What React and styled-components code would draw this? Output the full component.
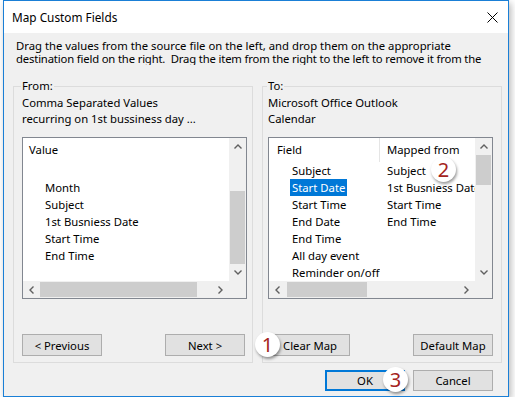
import React from 'react';
import styled, { createGlobalStyle } from 'styled-components';

const GlobalStyle = createGlobalStyle`
  html, body {
    margin: 0;
    padding: 0;
    background: #ffffff;
  }
  body {
    font-family: "Noto Sans", "Open Sans", sans-serif;
    font-size: 11.3px;
    color: #000;
  }
  * {
    box-sizing: border-box;
  }
`;

const Window = styled.div`
  margin-left: 3px;
  width: 506px;
  height: 397px;
  border: 1px solid #1a7fd6;
  background: #f0f0f0;
  box-shadow: 2px 3px 7px rgba(0, 0, 0, 0.28);
  display: flex;
  flex-direction: column;
`;

const TitleBar = styled.div`
  height: 32px;
  flex-shrink: 0;
  background: #fff;
  display: flex;
  align-items: center;
  justify-content: space-between;
  padding: 0 10px 0 8px;
`;

const Title = styled.span`
  font-size: 11.8px;
`;

const Body = styled.div`
  flex: 1;
  display: flex;
  flex-direction: column;
  padding: 6px 0 0 9px;
`;

const Description = styled.div`
  margin: 0 0 13px 3px;
  height: 26px;
  overflow: hidden;
`;

const DescLine = styled.div`
  line-height: 13px;
  white-space: pre;
  letter-spacing: ${(p) => p.$spacing || 0}px;
`;

const GroupRow = styled.div`
  display: flex;
  gap: 9px;
`;

const Group = styled.fieldset`
  width: 240px;
  min-width: 0;
  margin: 0;
  padding: 1px ${(p) => p.$pr}px 6px ${(p) => p.$pl}px;
  border: 1px solid #dcdcdc;
`;

const Legend = styled.legend`
  padding: 0 1px;
  margin-left: -1px;
  line-height: 16px;
`;

const InfoLine = styled.div`
  line-height: 16px;
  white-space: nowrap;
`;

const ListBox = styled.div`
  position: relative;
  margin-top: 10px;
  height: 162px;
  border: 1px solid #828790;
  background: #fff;
  display: grid;
  grid-template-columns: 1fr 17px;
  grid-template-rows: 1fr 17px;
`;

const ListContent = styled.div`
  overflow: hidden;
  white-space: nowrap;
`;

const HeaderRow = styled.div`
  display: flex;
  height: 24px;
  line-height: 24px;
`;

const HeaderCell = styled.div`
  width: ${(p) => (p.$w ? `${p.$w}px` : 'auto')};
  padding-left: ${(p) => p.$pl}px;
  border-right: ${(p) => (p.$divider ? '1px solid #e5e5e5' : 'none')};
`;

const Row = styled.div`
  display: flex;
  height: 17px;
  line-height: 17px;
`;

const Cell = styled.div`
  width: ${(p) => (p.$w ? `${p.$w}px` : 'auto')};
  flex: ${(p) => (p.$w ? 'none' : '1')};
  padding-left: ${(p) => p.$pl}px;
  overflow: hidden;
`;

const ItemText = styled.span`
  display: inline-block;
  height: 17px;
  padding: 0 2px;
  background: ${(p) => (p.$selected ? '#0078d7' : 'transparent')};
  color: ${(p) => (p.$selected ? '#fff' : '#000')};
`;

const VScroll = styled.div`
  background: #f0f0f0;
  display: flex;
  flex-direction: column;
`;

const HScroll = styled.div`
  background: #f0f0f0;
  display: flex;
`;

const Corner = styled.div`
  background: #f0f0f0;
`;

const ArrowBox = styled.div`
  width: 17px;
  height: 17px;
  flex-shrink: 0;
  display: flex;
  align-items: center;
  justify-content: center;
`;

const Track = styled.div`
  flex: 1;
  display: flex;
  flex-direction: ${(p) => (p.$vertical ? 'column' : 'row')};
`;

const Thumb = styled.div`
  background: #cdcdcd;
  ${(p) =>
    p.$vertical
      ? `margin: ${p.$offset}px 1px 0 1px; height: ${p.$size}px;`
      : `margin: 1px 0 1px ${p.$offset}px; width: ${p.$size}px;`}
`;

const ButtonRow = styled.div`
  margin-top: 35px;
  display: flex;
  justify-content: space-between;
  padding-right: ${(p) => p.$pr || 0}px;
`;

const BadgeAnchor = styled.div`
  position: relative;
  margin-left: ${(p) => p.$ml || 0}px;
`;

const Button = styled.button`
  width: 80px;
  height: ${(p) => p.$h || 22}px;
  padding: 0;
  margin: 0;
  background: #e1e1e1;
  border: ${(p) => (p.$default ? '2px solid #0078d7' : '1px solid #adadad')};
  font: inherit;
  color: #000;
`;

const Footer = styled.div`
  margin-top: 7px;
  display: flex;
  justify-content: flex-end;
  gap: 8px;
  padding-right: 15px;
`;

const Badge = styled.div`
  position: absolute;
  left: ${(p) => p.$left}px;
  top: ${(p) => p.$top}px;
  width: 25px;
  height: 25px;
  border-radius: 50%;
  background: #fff;
  box-shadow: 1px 2px 3px rgba(0, 0, 0, 0.4);
  color: #a4231d;
  font-size: 20px;
  line-height: 25px;
  text-align: center;
  font-family: "Noto Sans", "Open Sans", sans-serif;
  z-index: 2;
`;

const Chevron = ({ dir }) => {
  const pts = {
    up: '0.5,4.5 4,1 7.5,4.5',
    down: '0.5,0.5 4,4 7.5,0.5',
    left: '4.5,0.5 1,4 4.5,7.5',
    right: '0.5,0.5 4,4 0.5,7.5',
  }[dir];
  const vert = dir === 'up' || dir === 'down';
  return (
    <svg width={vert ? 8 : 5} height={vert ? 5 : 8} viewBox={vert ? '0 0 8 5' : '0 0 5 8'}>
      <polyline points={pts} fill="none" stroke="#606060" strokeWidth="1.4" />
    </svg>
  );
};

const CloseIcon = () => (
  <svg width="11" height="11" viewBox="0 0 11 11">
    <path d="M0.5 0.5 L10.5 10.5 M10.5 0.5 L0.5 10.5" stroke="#000" strokeWidth="1" />
  </svg>
);

const VerticalBar = ({ offset, size }) => (
  <VScroll>
    <ArrowBox><Chevron dir="up" /></ArrowBox>
    <Track $vertical>
      <Thumb $vertical $offset={offset} $size={size} />
    </Track>
    <ArrowBox><Chevron dir="down" /></ArrowBox>
  </VScroll>
);

const HorizontalBar = ({ offset, size }) => (
  <HScroll>
    <ArrowBox><Chevron dir="left" /></ArrowBox>
    <Track>
      <Thumb $offset={offset} $size={size} />
    </Track>
    <ArrowBox><Chevron dir="right" /></ArrowBox>
  </HScroll>
);

const sourceItems = ['', 'Month', 'Subject', '1st Busniess Date', 'Start Time', 'End Time'];

const mapping = [
  ['Subject', 'Subject'],
  ['Start Date', '1st Busniess Date'],
  ['Start Time', 'Start Time'],
  ['End Date', 'End Time'],
  ['End Time', ''],
  ['All day event', ''],
  ['Reminder on/off', ''],
];

export default function App() {
  return (
    <>
      <GlobalStyle />
      <Window>
        <TitleBar>
          <Title>Map Custom Fields</Title>
          <CloseIcon />
        </TitleBar>
        <Body>
          <Description>
            <DescLine>Drag the values from the source file on the left, and drop them on the appropriate</DescLine>
            <DescLine $spacing={-0.17}>{'destination field on the right.  Drag the item from the right to the left to remove it from the'}</DescLine>
          </Description>
          <GroupRow>
            <Group $pl={8} $pr={5}>
              <Legend>From:</Legend>
              <InfoLine>Comma Separated Values</InfoLine>
              <InfoLine>recurring on 1st bussiness day ...</InfoLine>
              <ListBox>
                <ListContent>
                  <HeaderRow>
                    <HeaderCell $pl={6}>Value</HeaderCell>
                  </HeaderRow>
                  {sourceItems.map((item, i) => (
                    <Row key={i}>
                      <Cell $pl={22}>{item}</Cell>
                    </Row>
                  ))}
                </ListContent>
                <VerticalBar offset={36} size={73} />
                <HorizontalBar offset={0} size={157} />
                <Corner />
              </ListBox>
              <ButtonRow $pr={2}>
                <Button>&lt; Previous</Button>
                <Button>Next &gt;</Button>
              </ButtonRow>
            </Group>
            <Group $pl={5} $pr={8}>
              <Legend>To:</Legend>
              <InfoLine>Microsoft Office Outlook</InfoLine>
              <InfoLine>Calendar</InfoLine>
              <ListBox>
                <ListContent>
                  <HeaderRow>
                    <HeaderCell $w={111} $pl={8} $divider>Field</HeaderCell>
                    <HeaderCell $pl={7}>Mapped from</HeaderCell>
                  </HeaderRow>
                  {mapping.map(([field, from], i) => (
                    <Row key={field}>
                      <Cell $w={111} $pl={21}>
                        <ItemText $selected={i === 1}>{field}</ItemText>
                      </Cell>
                      <Cell $pl={7}>{from}</Cell>
                    </Row>
                  ))}
                </ListContent>
                <VerticalBar offset={0} size={30} />
                <HorizontalBar offset={1} size={80} />
                <Corner />
                <Badge $left={162} $top={19}>2</Badge>
              </ListBox>
              <ButtonRow>
                <BadgeAnchor $ml={2}>
                  <Button>Clear Map</Button>
                  <Badge $left={-15} $top={-2}>1</Badge>
                </BadgeAnchor>
                <Button>Default Map</Button>
              </ButtonRow>
            </Group>
          </GroupRow>
          <Footer>
            <BadgeAnchor>
              <Button $default $h={21}>OK</Button>
              <Badge $left={58} $top={-3}>3</Badge>
            </BadgeAnchor>
            <Button $h={21}>Cancel</Button>
          </Footer>
        </Body>
      </Window>
    </>
  );
}
